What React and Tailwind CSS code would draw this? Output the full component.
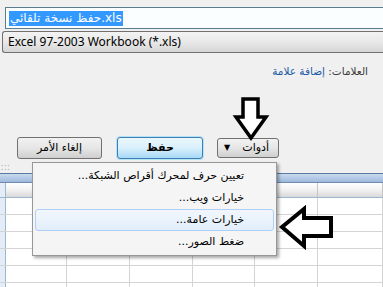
import React from "react";

const ar = { fontFamily: '"DejaVu Sans", "Noto Sans", sans-serif' };

const btnBase = "flex items-center rounded-[3px] border text-[11px] text-black ";
const btnGray = "border-[#707070] bg-gradient-to-b from-[#f2f2f2] via-[#e6e6e6] to-[#cfcfcf] ";
const btnDef =
  "border-[#3c7fb1] bg-gradient-to-b from-[#eaf6fd] via-[#d9f0fc] to-[#a7d9f5] shadow-[0_0_0_1px_#b6e2f8] ";

export default function App() {
  const cols = [62, 64, 65, 63, 64, 66];
  return (
    <div
      className="relative w-[383px] h-[287px] overflow-hidden bg-[#f0f0f0]"
      style={{ fontFamily: '"Noto Sans", "DejaVu Sans", sans-serif' }}
    >
      {/* dialog part */}
      <div className="h-[173px] flex flex-col">
        <div className="pt-[7px] pl-[5px]">
          <div className="h-[22px] border border-[#5b7d8c] border-r-0 bg-[#fbfeff] flex items-center pl-[3px]">
            <span
              dir="ltr"
              className="bg-[#3399ff] text-white text-[12px] leading-[15px] px-[1px]"
              style={ar}
            >
              حفظ نسخة تلقائي.xls
            </span>
          </div>
        </div>
        <div className="pt-[2px] pl-[2px]">
          <div className="h-[22px] border border-[#707070] border-r-0 rounded-l-[3px] bg-gradient-to-b from-[#f3f3f3] via-[#e8e8e8] to-[#d6d6d6] flex items-center pl-[5px] text-[12px] text-black">
            Excel 97-2003 Workbook (*.xls)
          </div>
        </div>
        <div dir="rtl" className="mt-[11px] pr-[15px] text-[10.5px] leading-[14px]" style={ar}>
          <span className="text-[#3c3c3c]">العلامات: </span>
          <span className="text-[#1c5aa6]">إضافة علامة</span>
        </div>
        <div className="mt-[59px] flex pl-[17px] h-[23px] items-start" style={ar}>
          <div className={btnBase + btnGray + "w-[85px] h-[22px] justify-center"}>إلغاء الأمر</div>
          <div className={btnBase + btnDef + "ml-[15px] w-[86px] h-[22px] justify-center font-bold"}>حفظ</div>
          <div className={btnBase + btnGray + "ml-[14px] mt-[1px] w-[62px] h-[20px] justify-between pl-[6px] pr-[9px]"}>
            <span className="text-[8px] leading-[8px] text-black">▼</span>
            <span>أدوات</span>
          </div>
        </div>
        <div className="mt-[4px] pl-[1px] text-[8px] leading-[6px] text-[#9a9a9a] tracking-[1px]">:::</div>
      </div>
      {/* excel part */}
      <div className="h-[1px] bg-[#5a7aa6]" />
      <div className="h-[8px] bg-gradient-to-b from-[#c9daf0] to-[#9fb9dc]" />
      <div className="h-[1px] bg-[#6f8bb0]" />
      <div className="flex h-[15px] bg-gradient-to-b from-[#ffffff] via-[#f2f2f2] to-[#d9d9d9] border-b border-[#9eb6ce]">
        <div className="w-[6px] border-r border-[#9eb6ce] bg-[#e4ecf7]" />
        {cols.map((w, i) => (
          <div key={i} className="border-r border-[#c5c5c5]" style={{ width: w }} />
        ))}
      </div>
      <div className="flex flex-col">
        {[0, 1, 2, 3, 4, 5].map((r) => (
          <div key={r} className="flex h-[17px] border-b border-[#d4d4d4] bg-white">
            <div className="w-[6px] border-r border-[#9eb6ce] bg-[#e4ecf7]" />
            {cols.map((w, i) => (
              <div key={i} className="border-r border-[#d4d4d4]" style={{ width: w }} />
            ))}
          </div>
        ))}
      </div>

      {/* dropdown menu */}
      <div
        dir="rtl"
        className="absolute left-[32px] top-[162px] w-[245px] border border-[#979797] bg-[#f5f5f5] py-[2px] px-[2px] shadow-[2px_2px_3px_rgba(0,0,0,0.35)]"
        style={ar}
      >
        {[
          "تعيين حرف لمحرك أقراص الشبكة...",
          "خيارات ويب...",
          "خيارات عامة...",
          "ضغط الصور...",
        ].map((t, i) => (
          <div
            key={i}
            className={
              "h-[22px] flex items-center pr-[29px] text-[11px] text-black rounded-[3px] border " +
              (i === 2
                ? "border-[#aecff7] bg-gradient-to-b from-[#f2f7fd] to-[#e2eefb]"
                : "border-transparent")
            }
          >
            {t}
          </div>
        ))}
      </div>

      {/* annotation arrows */}
      <svg className="absolute left-0 top-0" width="383" height="287" viewBox="0 0 383 287">
        <polygon
          points="243,99 258,99 258,117 266,117 251,138 236,117 243,117"
          fill="#ffffff"
          stroke="#000"
          strokeWidth="3.5"
          strokeLinejoin="miter"
        />
        <polygon
          points="282,227 304,209 304,218 331,218 331,236 304,236 304,246"
          fill="#ffffff"
          stroke="#000"
          strokeWidth="4"
          strokeLinejoin="miter"
        />
      </svg>
    </div>
  );
}
